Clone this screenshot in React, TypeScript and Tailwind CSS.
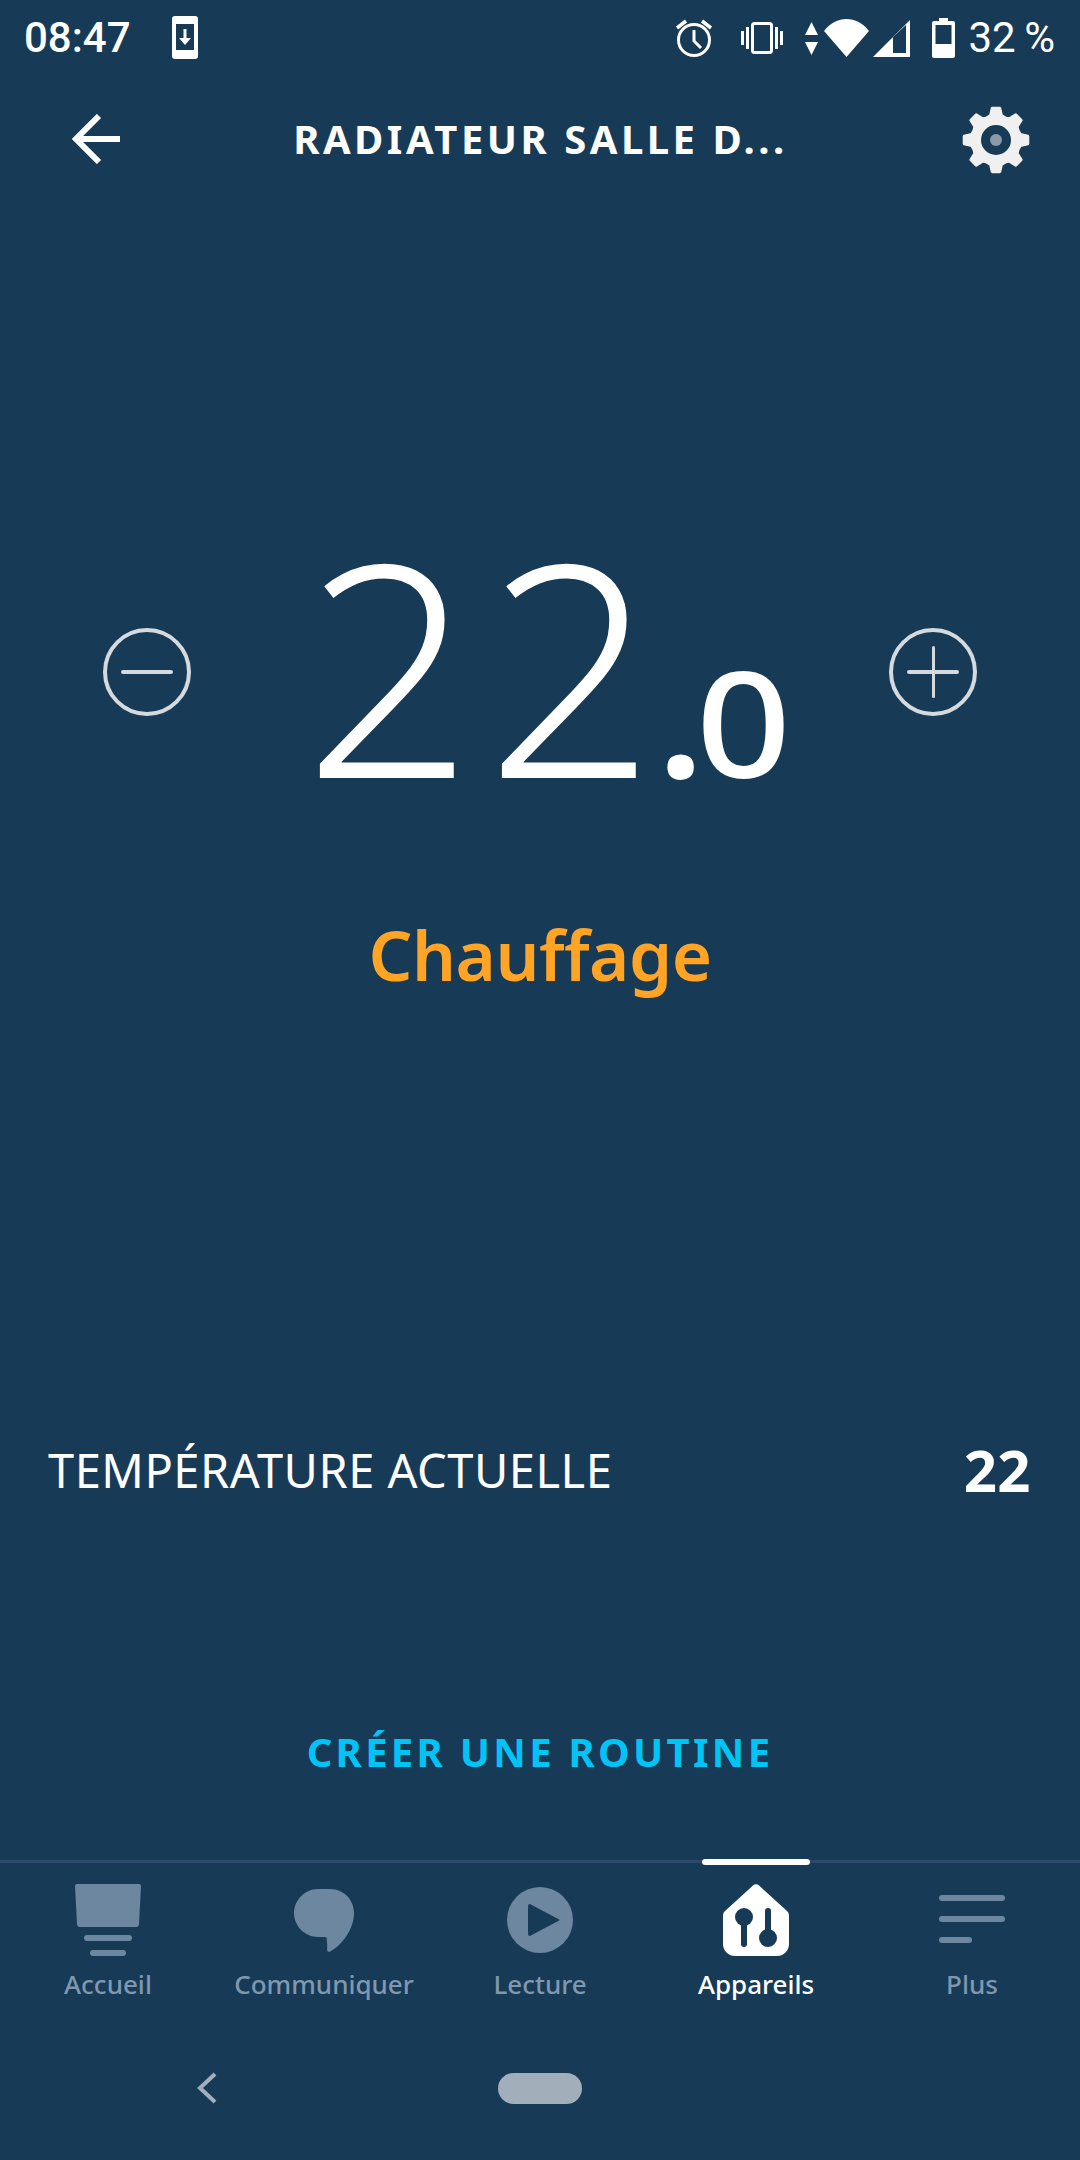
const NOTO = "font-['Noto_Sans','Open_Sans',sans-serif]";

function gearPath(cx: number, cy: number) {
  const pts: string[] = [];
  const teeth = 8;
  for (let i = 0; i < teeth; i++) {
    const a = (i * 2 * Math.PI) / teeth - Math.PI / 2;
    const d = (Math.PI * 2) / teeth;
    const seq: [number, number][] = [
      [24, -0.5 * d],
      [25, -0.28 * d],
      [32, -0.15 * d],
      [32, 0.15 * d],
      [25, 0.28 * d],
    ];
    for (const [r, o] of seq) {
      pts.push(`${(cx + r * Math.cos(a + o)).toFixed(2)},${(cy + r * Math.sin(a + o)).toFixed(2)}`);
    }
  }
  return pts.join(" ");
}

function Gear() {
  return (
    <svg width="70" height="70" viewBox="0 0 70 70">
      <polygon points={gearPath(35, 35)} fill="#f0f0f0" stroke="#f0f0f0" strokeWidth="3" strokeLinejoin="round" />
      <circle cx="35" cy="35" r="15" fill="#173a56" />
      <circle cx="35" cy="35" r="6" fill="#8b9aa8" />
    </svg>
  );
}

function StatusBar() {
  return (
    <div className="flex h-[76px] items-center pl-[24px] pr-[25px] text-white">
      <span className="font-['Roboto',sans-serif] text-[42px] leading-none font-medium">08:47</span>
      <svg className="ml-[41px] -mt-[1px]" width="26" height="43" viewBox="0 0 26 43">
        <rect width="26" height="43" rx="3" fill="#fff" />
        <rect x="4" y="8" width="18" height="26" fill="#173a56" />
        <path d="M11.5 13h3v9h4.5l-6 7-6-7h4.500z" fill="#fff" />
      </svg>
      <div className="ml-auto flex items-center">
        <svg width="38" height="40" viewBox="0 0 38 40" fill="none" stroke="#fff">
          <circle cx="19" cy="22" r="15.500" strokeWidth="3" />
          <path d="M19 12v11l7 7" strokeWidth="3" />
          <path d="M2 10l9-7M36 10l-9-7" strokeWidth="3.500" />
        </svg>
        <svg className="ml-[28px]" width="42" height="32" viewBox="0 0 42 32">
          <rect x="11.500" y="1.500" width="19" height="29" rx="2" fill="none" stroke="#fff" strokeWidth="3" />
          <path d="M0 9h3v14H0zM5 5h3v22H5zM34 5h3v22h-3zM39 9h3v14h-3z" fill="#fff" />
        </svg>
        <svg className="ml-[22px]" width="13" height="33" viewBox="0 0 13 33">
          <path d="M6.500 0l6.500 13H0zM0 20h13l-6.500 13z" fill="#fff" />
        </svg>
        <svg className="ml-[6px]" width="45" height="38" viewBox="0 0 45 38">
          <path d="M0 12C12 -4 33 -4 45 12L22.500 38z" fill="#fff" />
        </svg>
        <svg className="ml-[4px]" width="38" height="38" viewBox="0 0 38 38">
          <path d="M0 38L37 1v37z" fill="#fff" />
          <path d="M20 18L33 6v28H20z" fill="#173a56" />
        </svg>
        <svg className="ml-[21px]" width="23" height="40" viewBox="0 0 23 40">
          <path d="M7 0h9v3h5a2 2 0 0 1 2 2v33a2 2 0 0 1-2 2H2a2 2 0 0 1-2-2V5a2 2 0 0 1 2-2h5z" fill="#fff" />
          <rect x="3.500" y="7" width="16" height="19" fill="#173a56" />
        </svg>
        <span className="ml-[13px] font-['Roboto',sans-serif] text-[42px] leading-none">32&#8201;%</span>
      </div>
    </div>
  );
}

function Header() {
  return (
    <div className="relative flex h-[128px] items-center justify-between pl-[72px] pr-[49px]">
      <svg className="-mt-[2px]" width="48" height="50" viewBox="0 0 48 50" fill="none" stroke="#fff" strokeWidth="6">
        <path d="M48 25H4" />
        <path d="M27 2L4 25l23 23" />
      </svg>
      <span className={`${NOTO} -mt-[3px] text-[40px] font-bold leading-none tracking-[3.500px] text-white`}>RADIATEUR SALLE D...</span>
      <Gear />
    </div>
  );
}

function RoundButton({ plus }: { plus?: boolean }) {
  return (
    <div className="relative flex h-[88px] w-[88px] shrink-0 items-center justify-center rounded-full border-[4px] border-[#d5dadf]">
      <div className="h-[4px] w-[52px] rounded-full bg-[#d5dadf]" />
      {plus && <div className="absolute h-[52px] w-[3px] rounded-full bg-[#d5dadf]" />}
    </div>
  );
}

function Temperature() {
  return (
    <div className="mt-[318px] flex h-[300px] items-center justify-between px-[103px]">
      <RoundButton />
      <div className={`${NOTO} ml-[14px] flex items-baseline self-start text-white`}>
        <span className="text-[296px] font-[360] leading-[284px]">
          <span className="tracking-[13px]">2</span>
          <span className="tracking-[4px]">2</span>
        </span>
        <span className="text-[152px] font-bold leading-[284px] tracking-[-6px]">.</span>
        <span className="mr-[10px] inline-block origin-left scale-x-[1.13] text-[147px] font-medium leading-[284px]">0</span>
      </div>
      <RoundButton plus />
    </div>
  );
}

function NavItem({ label, active, children }: { label: string; active?: boolean; children: React.ReactNode }) {
  return (
    <div className="relative flex w-[216px] flex-col items-center">
      {active && <div className="absolute top-[-4px] h-[6px] w-[108px] rounded-full bg-white" />}
      <div className="flex h-[93px] items-end">{children}</div>
      <span className={`${NOTO} mt-[8px] text-[26px] font-medium leading-[40px] ${active ? "text-white" : "text-[#7f98b0]"}`}>{label}</span>
    </div>
  );
}

function BottomNav() {
  const c = "#6e87a0";
  return (
    <div className="flex h-[154px] border-t-[3px] border-[#2c4a6b]">
      <NavItem label="Accueil">
        <svg width="66" height="72" viewBox="0 0 66 72" fill={c}>
          <path d="M2 0h62a2 2 0 0 1 2 2l-2 38a3 3 0 0 1-3 3H5a3 3 0 0 1-3-3L0 2a2 2 0 0 1 2-2z" />
          <rect x="9" y="51" width="48" height="6" rx="3" />
          <rect x="15" y="66" width="36" height="6" rx="3" />
        </svg>
      </NavItem>
      <NavItem label="Communiquer">
        <svg className="mb-[3px]" width="60" height="64" viewBox="0 0 60 64" fill={c}>
          <path d="M24 0H36C50 0 60 11 60 24C60 40 48 56 37 62C34 64 33 62 33 60C34 56 32 50 33 49C32 48 30 48 24 48C11 48 0 37 0 24C0 11 11 0 24 0Z" />
        </svg>
      </NavItem>
      <NavItem label="Lecture">
        <svg className="mb-[3px]" width="66" height="66" viewBox="0 0 66 66">
          <circle cx="33" cy="33" r="33" fill={c} />
          <path d="M23 17l30 16-30 16a2 2 0 0 1-2-2V19a2 2 0 0 1 2-2z" fill="#173a56" />
        </svg>
      </NavItem>
      <NavItem label="Appareils" active>
        <svg width="66" height="72" viewBox="0 0 66 72">
          <path d="M30 1.500a4 4 0 0 1 6 0L64 27a6 6 0 0 1 2 4v29a12 12 0 0 1-12 12H12A12 12 0 0 1 0 60V31a6 6 0 0 1 2-4z" fill="#fff" />
          <circle cx="21" cy="33" r="9" fill="#173a56" />
          <rect x="18" y="36" width="6" height="27" rx="3" fill="#173a56" />
          <rect x="42" y="24" width="6" height="27" rx="3" fill="#173a56" />
          <circle cx="45" cy="54" r="9" fill="#173a56" />
        </svg>
      </NavItem>
      <NavItem label="Plus">
        <svg className="mb-[13px]" width="66" height="48" viewBox="0 0 66 48" fill={c}>
          <rect y="0" width="66" height="6" rx="3" />
          <rect y="21" width="66" height="6" rx="3" />
          <rect y="42" width="33" height="6" rx="3" />
        </svg>
      </NavItem>
    </div>
  );
}

export default function App() {
  return (
    <div className="flex h-[2160px] w-[1080px] flex-col overflow-hidden bg-[#173a56]">
      <StatusBar />
      <Header />
      <Temperature />
      <div className={`${NOTO} mt-[84px] text-center text-[69px] font-semibold leading-[96px] tracking-[-0.5px] text-[#ffa424]`}>Chauffage</div>
      <div className={`${NOTO} mt-[438px] flex h-[60px] items-center justify-between pl-[48px] pr-[49px] text-white`}>
        <span className="text-[47px] leading-none tracking-[0.5px]">TEMPÉRATURE ACTUELLE</span>
        <span className="text-[58px] font-bold leading-none tracking-[0.5px]">22</span>
      </div>
      <div className={`${NOTO} mt-[222px] text-center text-[40px] font-bold leading-[60px] tracking-[3.300px] text-[#00c4f5]`}>CRÉER UNE ROUTINE</div>
      <div className="mt-[78px]">
        <BottomNav />
      </div>
      <div className="flex items-center pt-[58px]">
        <svg className="ml-[196px]" width="22" height="32" viewBox="0 0 22 32" fill="none" stroke="#a2afbb" strokeWidth="4">
          <path d="M19 2L4 16l15 14" />
        </svg>
        <div className="ml-[280px] h-[31px] w-[84px] rounded-full bg-[#a2afbb]" />
      </div>
    </div>
  );
}
